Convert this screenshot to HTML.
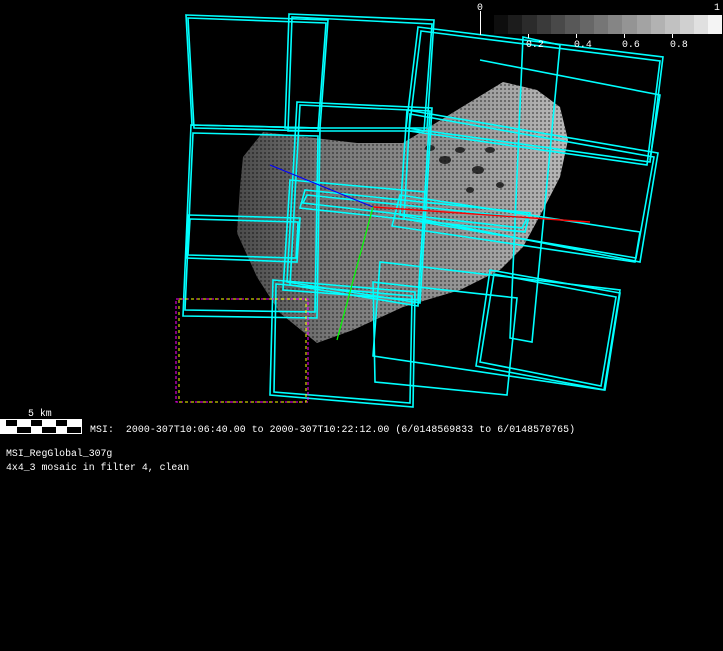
<!DOCTYPE html>
<html><head><meta charset="utf-8"><style>
html,body{margin:0;padding:0;background:#000;width:723px;height:651px;overflow:hidden}
svg{position:absolute;left:0;top:0}
.t{font-family:"Liberation Mono","DejaVu Sans Mono",monospace;font-size:9.85px;fill:#fff}
</style></head><body>
<svg width="723" height="651" viewBox="0 0 723 651" xmlns="http://www.w3.org/2000/svg">
<defs>
<linearGradient id="ag" x1="0" y1="0" x2="1" y2="0">
<stop offset="0" stop-color="#4a4a4a"/><stop offset="0.3" stop-color="#7a7a7a"/><stop offset="0.6" stop-color="#8e8e8e"/><stop offset="1" stop-color="#b8b8b8"/>
</linearGradient>
<pattern id="dots" width="4" height="4" patternUnits="userSpaceOnUse">
<rect x="0" y="0" width="2" height="2" fill="#000" opacity="0.35"/>
</pattern>
</defs>
<path d="M243,157 L263,132 L357,143 L403,143 L503,82 L537,90 L560,107 L568,140 L560,177 L543,210 L523,247 L500,270 L460,290 L403,307 L353,330 L317,343 L280,313 L257,277 L237,233 L240,187 Z" fill="url(#ag)"/>
<path d="M243,157 L263,132 L357,143 L403,143 L503,82 L537,90 L560,107 L568,140 L560,177 L543,210 L523,247 L500,270 L460,290 L403,307 L353,330 L317,343 L280,313 L257,277 L237,233 L240,187 Z" fill="url(#dots)"/>
<g fill="#111" opacity="0.8">
<ellipse cx="445" cy="160" rx="6" ry="4"/><ellipse cx="460" cy="150" rx="5" ry="3"/><ellipse cx="478" cy="170" rx="6" ry="4"/><ellipse cx="490" cy="150" rx="5" ry="3"/><ellipse cx="430" cy="148" rx="5" ry="3"/><ellipse cx="500" cy="185" rx="4" ry="3"/><ellipse cx="470" cy="190" rx="4" ry="3"/>
</g>
<g fill="none" stroke="#0ff" stroke-width="1.6">
<path d="M186,15 L328,20 L320,128 L192,125 Z M188,18 L326,23 L318,131 L194,128 Z"/>
<path d="M191,125 L320,128 L317,318 L183,316 Z M193,133 L318,136 L315,312 L185,310 Z"/>
<path d="M289,14 L434,20 L427,128 L285,128 Z M292,17 L432,24 L424,131 L288,131 Z"/>
<path d="M297,102 L432,108 L420,303 L287,282 Z M300,105 L430,111 L418,306 L290,285 Z"/>
<path d="M418,27 L663,57 L650,162 L406,128 Z M421,31 L660,61 L647,165 L409,131 Z"/>
<path d="M523,37 L560,45 L532,342 L510,338 Z"/>
<path d="M407,110 L658,153 L640,262 L400,215 Z M410,114 L654,157 L636,258 L404,219 Z"/>
<path d="M290,180 L425,192 L418,300 L283,290 Z"/>
<path d="M380,262 L620,290 L604,390 L373,356 Z"/>
<path d="M490,270 L620,293 L605,390 L476,366 Z M494,274 L616,297 L601,386 L480,362 Z"/>
<path d="M273,280 L415,292 L413,407 L270,395 Z M276,284 L412,296 L410,403 L274,392 Z"/>
<path d="M373,282 L517,298 L507,395 L375,382 Z"/>
<path d="M188,215 L300,218 L297,262 L186,258 Z M190,219 L298,222 L296,258 L188,255 Z"/>
<path d="M400,195 L640,232 L635,262 L392,226 Z"/>
<path d="M305,190 L530,213 L525,232 L300,208 Z M307,195 L527,218 L522,228 L303,203 Z"/>
<path d="M480,60 L660,95 L650,160"/>
</g>
<rect x="176" y="299" width="132" height="103" fill="none" stroke="#f0f" stroke-width="1" stroke-dasharray="3,2"/>
<rect x="179" y="299" width="127" height="103" fill="none" stroke="#ff0" stroke-width="1" stroke-dasharray="3,3"/>
<line x1="270" y1="165" x2="373" y2="207" stroke="#00f" stroke-width="1.2"/>
<line x1="373" y1="207" x2="590" y2="222" stroke="#f00" stroke-width="1.4"/>
<line x1="373" y1="207" x2="337" y2="340" stroke="#0f0" stroke-width="1.2"/>
<g>
<rect x="494" y="15" width="15" height="19" fill="#0e0e0e"/><rect x="508" y="15" width="15" height="19" fill="#1c1c1c"/><rect x="522" y="15" width="15" height="19" fill="#2b2b2b"/><rect x="537" y="15" width="15" height="19" fill="#3a3a3a"/><rect x="551" y="15" width="15" height="19" fill="#494949"/><rect x="565" y="15" width="15" height="19" fill="#585858"/><rect x="580" y="15" width="15" height="19" fill="#676767"/><rect x="594" y="15" width="15" height="19" fill="#767676"/><rect x="608" y="15" width="15" height="19" fill="#858585"/><rect x="622" y="15" width="15" height="19" fill="#949494"/><rect x="637" y="15" width="15" height="19" fill="#a3a3a3"/><rect x="651" y="15" width="15" height="19" fill="#b2b2b2"/><rect x="665" y="15" width="15" height="19" fill="#c1c1c1"/><rect x="680" y="15" width="15" height="19" fill="#d0d0d0"/><rect x="694" y="15" width="15" height="19" fill="#e0e0e0"/><rect x="708" y="15" width="14" height="19" fill="#f4f4f4"/>
</g>
<g stroke="#fff" stroke-width="1"><line x1="480.5" y1="11" x2="480.5" y2="35"/><line x1="528.5" y1="34" x2="528.5" y2="38"/><line x1="576.5" y1="34" x2="576.5" y2="38"/><line x1="624.5" y1="34" x2="624.5" y2="38"/><line x1="672.5" y1="34" x2="672.5" y2="38"/></g>
<text class="t" x="477" y="10">0</text><text class="t" x="714" y="10">1</text>
<text class="t" x="526" y="47">0.2</text><text class="t" x="574" y="47">0.4</text><text class="t" x="622" y="47">0.6</text><text class="t" x="670" y="47">0.8</text>
<rect x="0" y="419" width="82" height="15" fill="#fff"/>
<g fill="#000"><rect x="6" y="420" width="11" height="6"/><rect x="31" y="420" width="11" height="6"/><rect x="56" y="420" width="11" height="6"/><rect x="17" y="427" width="14" height="6"/><rect x="42" y="427" width="14" height="6"/><rect x="67" y="427" width="14" height="6"/></g>
<text class="t" x="28" y="416">5 km</text>
<text class="t" x="90" y="432" xml:space="preserve" textLength="485">MSI:  2000-307T10:06:40.00 to 2000-307T10:22:12.00 (6/0148569833 to 6/0148570765)</text>
<text class="t" x="6" y="456">MSI_RegGlobal_307g</text>
<text class="t" x="6" y="470">4x4_3 mosaic in filter 4, clean</text>
</svg>
</body></html>
